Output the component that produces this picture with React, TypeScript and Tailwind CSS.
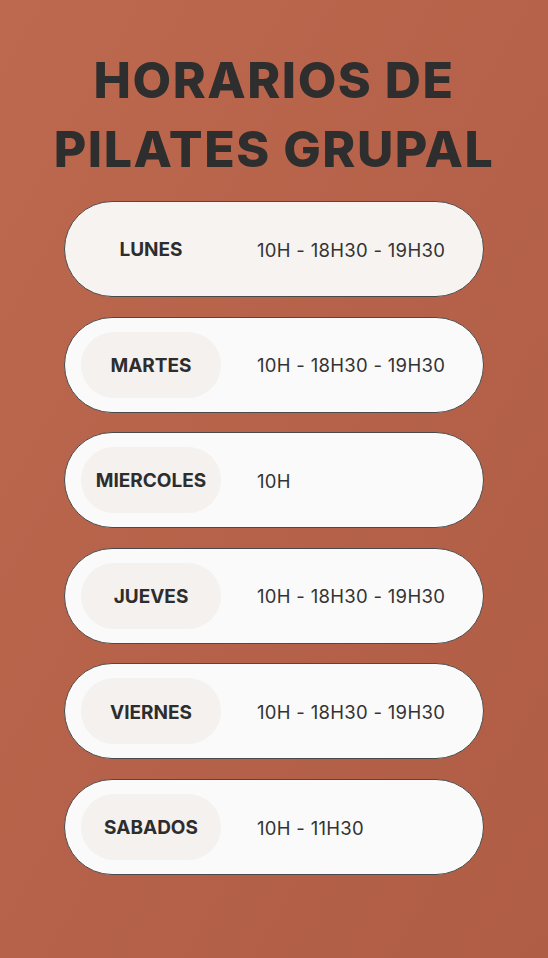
import React from "react";

const rows = [
  { day: "LUNES", time: "10H - 18H30 - 19H30", first: true },
  { day: "MARTES", time: "10H - 18H30 - 19H30" },
  { day: "MIERCOLES", time: "10H" },
  { day: "JUEVES", time: "10H - 18H30 - 19H30" },
  { day: "VIERNES", time: "10H - 18H30 - 19H30" },
  { day: "SABADOS", time: "10H - 11H30" },
];

export default function App() {
  return (
    <div
      className="w-[548px] h-[958px] overflow-hidden bg-gradient-to-br from-[#bc694f] via-[#b6624a] to-[#b05d45] text-[#2d2d2d]"
      style={{ fontFamily: "Inter, 'Open Sans', sans-serif" }}
    >
      <h1 className="pt-[46px] text-center text-[50px] font-extrabold leading-[69px] tracking-[1.5px] text-[#2e2e2e]">
        HORARIOS DE
        <br />
        PILATES GRUPAL
      </h1>
      <div className="mt-[17px] flex flex-col gap-[19.6px] pl-[64px]">
        {rows.map((r) => (
          <div
            key={r.day}
            className={`flex h-[96px] w-[420px] items-center rounded-full border border-[#4a4a4a] px-[16px] ${
              r.first ? "bg-[#f6f3f0]" : "bg-[#fafafa]"
            }`}
          >
            <div
              className={`flex h-[66px] w-[140px] items-center justify-center rounded-full pt-[3px] text-[19px] font-bold ${
                r.first ? "" : "bg-[#f4f1ee]"
              }`}
            >
              {r.day}
            </div>
            <div className="ml-[36px] pt-[3px] text-[18.5px] tracking-[0.3px] font-normal text-[#333]">{r.time}</div>
          </div>
        ))}
      </div>
    </div>
  );
}
